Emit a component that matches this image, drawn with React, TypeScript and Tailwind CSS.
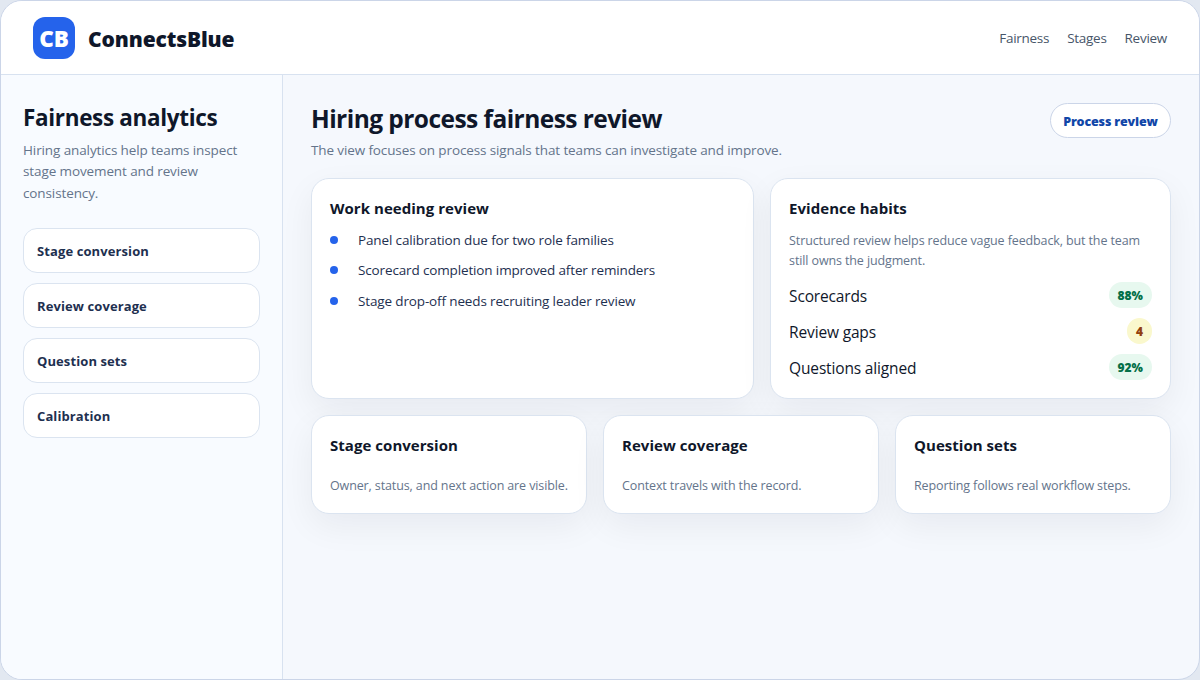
import React from 'react';

const NAV_LINKS = ['Fairness', 'Stages', 'Review'];

const SIDE_ITEMS = ['Stage conversion', 'Review coverage', 'Question sets', 'Calibration'];

const TASKS = [
  'Panel calibration due for two role families',
  'Scorecard completion improved after reminders',
  'Stage drop-off needs recruiting leader review',
];

const METRICS = [
  { label: 'Scorecards', value: '88%', tone: 'bg-[#e7f8ef] text-[#047048]' },
  { label: 'Review gaps', value: '4', tone: 'bg-[#faf8cd] text-[#92400e]' },
  { label: 'Questions aligned', value: '92%', tone: 'bg-[#e7f8ef] text-[#047048]' },
];

const SUMMARIES = [
  { title: 'Stage conversion', text: 'Owner, status, and next action are visible.' },
  { title: 'Review coverage', text: 'Context travels with the record.' },
  { title: 'Question sets', text: 'Reporting follows real workflow steps.' },
];

const Card: React.FC<{ title: string; children: React.ReactNode; className?: string }> = ({ title, children, className = '' }) => (
  <section className={`rounded-[18px] border border-[#dbe4f0] bg-white px-[18px] pt-[17px] shadow-[0_12px_34px_rgba(15,23,42,0.06)] ${className}`}>
    <h3 className="text-[15px] leading-6 font-bold tracking-[0.04px]">{title}</h3>
    {children}
  </section>
);

const App: React.FC = () => {
  return (
    <div className="h-[680px] w-[1200px] overflow-hidden bg-[#e2e8f1] font-['Open_Sans',sans-serif] text-[#0f172a]">
      <div className="flex h-full flex-col overflow-hidden rounded-[22px] border border-[#cbd5e8] bg-[#f5f8fd]">
        <header className="flex h-[74px] shrink-0 items-center justify-between border-b border-[#d8e2f0] bg-white px-8">
          <div className="flex items-center gap-[13px]">
            <div className="flex h-[42px] w-[42px] items-center justify-center rounded-xl bg-[#2563eb] pt-[2px] text-[22.5px] font-extrabold tracking-[-0.2px] text-white">CB</div>
            <span className="pt-[5px] text-[21px] font-extrabold tracking-[-0.13px]">ConnectsBlue</span>
          </div>
          <nav className="flex gap-[18px] pt-[2px] text-[13.5px] tracking-[-0.28px] text-[#475569]">
            {NAV_LINKS.map(link => <a key={link}>{link}</a>)}
          </nav>
        </header>

        <div className="flex min-h-0 flex-1">
          <aside className="w-[282px] shrink-0 border-r border-[#d8e2f0] bg-[#f8fbff] px-[22px] pt-7">
            <h2 className="text-[22.5px] leading-[30px] font-bold tracking-[-0.33px]">Fairness analytics</h2>
            <p className="mt-[6.6px] text-[13.5px] leading-[21.7px] tracking-[-0.11px] text-[#64748b]">
              Hiring analytics help teams inspect<br />stage movement and review<br />consistency.
            </p>
            <ul className="mt-[23.3px] flex flex-col gap-[10px]">
              {SIDE_ITEMS.map(item => (
                <li key={item} className="flex h-[45px] items-center rounded-[14px] border border-[#dbe4f0] bg-white px-[13px] pt-[2px] text-[13px] font-bold tracking-[0.1px] text-[#1e3050]">
                  {item}
                </li>
              ))}
            </ul>
          </aside>

          <main className="min-w-0 flex-1 px-7 pt-7">
            <div className="flex h-[75px] items-start justify-between">
              <div>
                <h1 className="text-[24.5px] leading-[31px] font-bold tracking-[-0.55px]">Hiring process fairness review</h1>
                <p className="mt-[6px] text-[13.5px] leading-5 tracking-[-0.12px] text-[#64748b]">The view focuses on process signals that teams can investigate and improve.</p>
              </div>
              <span className="flex h-[35px] w-[121px] items-center justify-center rounded-full border border-[#cbd5e8] bg-white pt-[3px] text-[12.5px] font-extrabold tracking-[-0.15px] text-[#1046a8]">Process review</span>
            </div>

            <div className="grid grid-cols-[1.05fr_.95fr] gap-4">
              <Card title="Work needing review" className="h-[221px]">
                <ul className="mt-[9.8px] flex flex-col gap-[10px] text-[13.5px] leading-[20.4px] tracking-[-0.14px] text-[#1e3050]">
                  {TASKS.map(task => (
                    <li key={task} className="flex items-center gap-5">
                      <span className="h-2 w-2 rounded-full bg-[#2563eb]" />
                      <span>{task}</span>
                    </li>
                  ))}
                </ul>
              </Card>

              <Card title="Evidence habits" className="h-[221px]">
                <p className="mt-[11px] text-[12.5px] leading-[20px] tracking-[-0.12px] text-[#64748b]">
                  Structured review helps reduce vague feedback, but the team<br />still owns the judgment.
                </p>
                <dl className="mt-[11px] flex flex-col gap-[10px]">
                  {METRICS.map(metric => (
                    <div key={metric.label} className="flex h-[26px] items-center justify-between">
                      <dt className="pt-1 text-[15.5px] tracking-[-0.16px]">{metric.label}</dt>
                      <dd className={`flex h-[26px] items-center rounded-full px-[9px] pt-px text-[12px] font-extrabold ${metric.tone}`}>{metric.value}</dd>
                    </div>
                  ))}
                </dl>
              </Card>
            </div>

            <div className="mt-4 grid grid-cols-3 gap-4">
              {SUMMARIES.map(item => (
                <Card key={item.title} title={item.title} className="h-[99px]">
                  <p className="mt-[19px] text-[12.5px] leading-[20px] tracking-[-0.12px] text-[#64748b]">{item.text}</p>
                </Card>
              ))}
            </div>
          </main>
        </div>
      </div>
    </div>
  );
};

export default App;
